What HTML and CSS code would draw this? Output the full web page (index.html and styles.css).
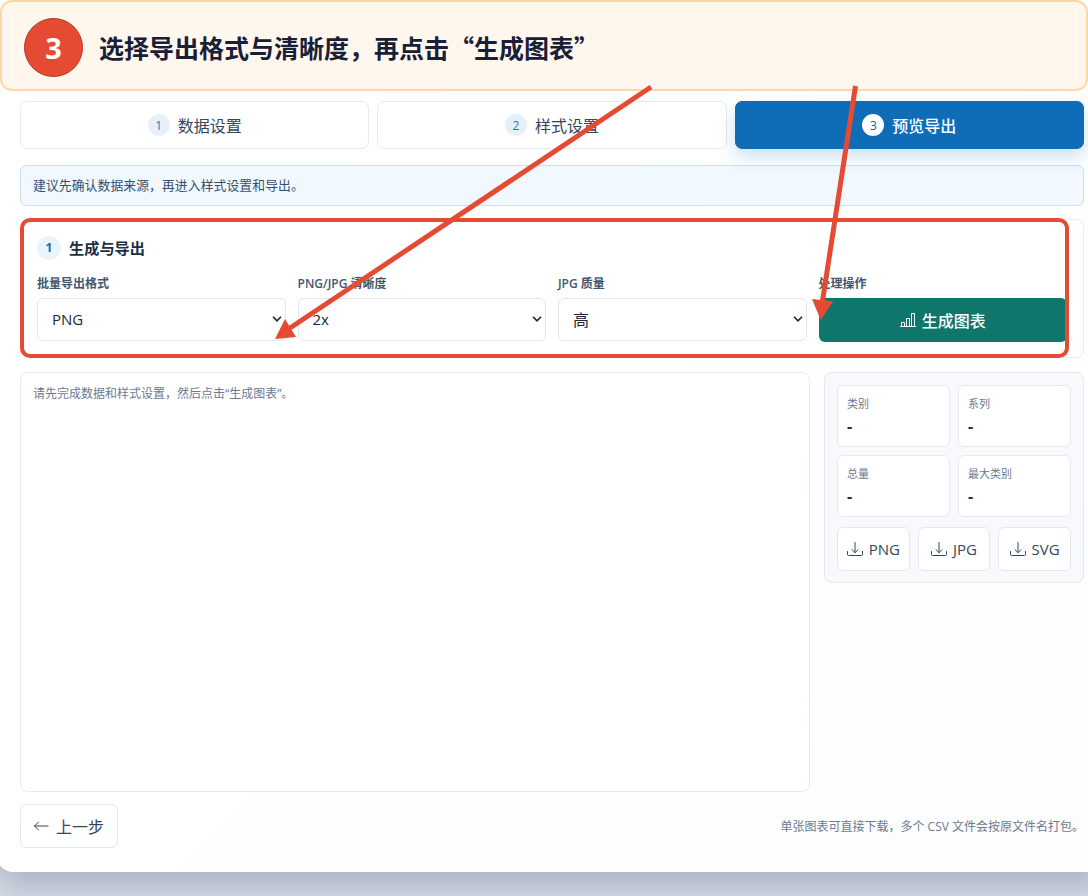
FILE: index.html
```
<!DOCTYPE html>
<html lang="zh-CN">
<head>
    <meta charset="UTF-8">
    <meta name="viewport" content="width=device-width, initial-scale=1.0">
    <link rel="stylesheet" href="styles.css">
    <title>预览导出</title>
</head>

<body>
    <div class="banner-wrap">
        <header class="banner">
            <span class="banner-num">3</span>
            <h1>选择导出格式与清晰度，再点击“生成图表”</h1>
        </header>
    </div>

    <main class="card">
        <nav class="steps">
            <div class="step"><span class="step-num">1</span>数据设置</div>
            <div class="step"><span class="step-num">2</span>样式设置</div>
            <div class="step active"><span class="step-num">3</span>预览导出</div>
        </nav>

        <p class="hint">建议先确认数据来源，再进入样式设置和导出。</p>

        <section class="export">
            <h2><span class="section-num">1</span>生成与导出</h2>
            <div class="fields">
                <div class="field">
                    <label>批量导出格式</label>
                    <div class="select latin">PNG<svg class="chevron" viewBox="0 0 10 6"><path d="M1 .8 5 4.8 9 .8"/></svg></div>
                </div>
                <div class="field">
                    <label>PNG/JPG 清晰度</label>
                    <div class="select latin">2x<svg class="chevron" viewBox="0 0 10 6"><path d="M1 .8 5 4.8 9 .8"/></svg></div>
                </div>
                <div class="field">
                    <label>JPG 质量</label>
                    <div class="select">高<svg class="chevron" viewBox="0 0 10 6"><path d="M1 .8 5 4.8 9 .8"/></svg></div>
                </div>
                <div class="field">
                    <label>处理操作</label>
                    <button class="generate">
                        <svg class="icon" viewBox="0 0 16 16"><path d="M.5 14.500h15M1.500 14.500v-4h3v4M6.500 14.500v-8h3v8M11.500 14.500v-13h3v13"/></svg>
                        生成图表
                    </button>
                </div>
            </div>
        </section>

        <div class="workspace">
            <div class="preview">请先完成数据和样式设置，然后点击“生成图表”。</div>
            <aside class="side">
                <div class="stats">
                    <div class="stat"><span>类别</span><b>-</b></div>
                    <div class="stat"><span>系列</span><b>-</b></div>
                    <div class="stat"><span>总量</span><b>-</b></div>
                    <div class="stat"><span>最大类别</span><b>-</b></div>
                </div>
                <div class="downloads">
                    <button><svg class="icon" viewBox="0 0 16 16"><path d="M.5 10.500v3a1 1 0 0 0 1 1h13a1 1 0 0 0 1-1v-3M8 1.500v10M5 8.700l3 3 3-3"/></svg>PNG</button>
                    <button><svg class="icon" viewBox="0 0 16 16"><path d="M.5 10.500v3a1 1 0 0 0 1 1h13a1 1 0 0 0 1-1v-3M8 1.500v10M5 8.700l3 3 3-3"/></svg>JPG</button>
                    <button><svg class="icon" viewBox="0 0 16 16"><path d="M.5 10.500v3a1 1 0 0 0 1 1h13a1 1 0 0 0 1-1v-3M8 1.500v10M5 8.700l3 3 3-3"/></svg>SVG</button>
                </div>
            </aside>
        </div>

        <footer class="bottom">
            <button class="prev"><svg class="icon" viewBox="0 0 16 16"><path d="M15 8H1.500M5.500 4l-4 4 4 4"/></svg>上一步</button>
            <span class="note">单张图表可直接下载，多个 CSV 文件会按原文件名打包。</span>
        </footer>
    </main>

    <!-- 标注 -->
    <svg class="marks" viewBox="0 0 1088 896">
        <rect x="22" y="220" width="1045" height="136" rx="8"/>
        <path d="M651 87 290 328M855.500 86 822.500 301"/>
        <polygon points="275,339 285,319 296,337"/>
        <polygon points="820.700,320 812,299 833.300,301.300"/>
    </svg>
</body>
</html>
```

FILE: styles.css
```
* {
    box-sizing: border-box;
}
body {
    position: relative;
    margin: 0;
    width: 1088px;
    height: 896px;
    overflow: hidden;
    background-color: #dbe0e9;
    color: #24364b;
    font-family: "Open Sans", "Noto Sans CJK SC", sans-serif;
    font-size: 16px;
}
h1, h2, p {
    margin: 0;
}
button {
    font: inherit;
    color: inherit;
}
.banner-wrap {
    position: relative;
    z-index: 1;
    background-color: #fff;
}
.banner {
    display: flex;
    align-items: center;
    gap: 17px;
    height: 91px;
    padding: 4px 22px 0;
    background-color: #fff6ed;
    border: 2px solid #fed7a5;
    border-radius: 12px;
}
.banner-num {
    display: grid;
    place-items: center;
    width: 59px;
    height: 59px;
    border: 1px solid #b83422;
    border-radius: 50%;
    background-color: #e44b32;
    color: #fff;
    font-size: 29px;
    font-weight: 700;
    line-height: 57px;
}
.banner h1 {
    margin: -2px 0 0 -1px;
    color: #172036;
    font-family: "Noto Sans CJK SC", sans-serif;
    font-size: 25px;
    line-height: 36px;
}
/* 卡片的顶部被说明条盖住 */
.card {
    width: 1112px;
    height: 801px;
    margin: -20px 0 0 -4px;
    padding: 30px 28px 24px 24px;
    border-radius: 18px;
    background: linear-gradient(135deg, #fff 0%, #fdfefe 75%, #fcfcfd 100%);
    box-shadow: 0 16px 36px rgba(35, 50, 80, .28);
}
.steps {
    display: grid;
    grid-template-columns: repeat(3, 1fr);
    gap: 8px;
    width: 1064px;
    height: 48px;
}
.step {
    display: flex;
    align-items: center;
    justify-content: center;
    gap: 8px;
    border: 1px solid #e7eaef;
    border-radius: 7px;
    background-color: #fff;
    color: #33465b;
}
.step-num {
    display: grid;
    place-items: center;
    width: 22px;
    height: 22px;
    border-radius: 50%;
    background-color: #e7f0f9;
    color: #2f76a5;
    font-size: 12px;
}
.step.active {
    border-color: #0f6db7;
    background-color: #0f6db7;
    color: #fff;
    font-weight: 500;
    box-shadow: 0 8px 18px rgba(15, 109, 183, .2);
}
.active .step-num {
    background-color: #fff;
    color: #1c5c88;
    font-weight: 400;
}
.hint {
    width: 1064px;
    height: 41px;
    margin-top: 16px;
    padding-left: 12px;
    border: 1px solid #cfe0ec;
    border-radius: 6px;
    background-color: #f1f8fe;
    color: #34506e;
    font-size: 12.8px;
    letter-spacing: .1px;
    line-height: 38px;
}
.export {
    width: 1064px;
    height: 139px;
    margin-top: 13px;
    padding: 16px;
    border: 1px solid #e9ecf0;
    border-radius: 8px;
    background-color: #fff;
}
.export h2 {
    display: flex;
    align-items: center;
    gap: 8px;
    height: 24px;
    color: #1b2f45;
    font-size: 15.2px;
    line-height: 22px;
}
.section-num {
    display: grid;
    place-items: center;
    width: 24px;
    height: 24px;
    border-radius: 50%;
    background-color: #e9f4fc;
    color: #0f6db7;
    font-size: 12px;
}
.fields {
    display: grid;
    grid-template-columns: repeat(4, 1fr);
    gap: 12px;
    margin-top: 14px;
}
.field label {
    display: block;
    height: 24px;
    color: #43566d;
    font-size: 12px;
    font-weight: 600;
    line-height: 19px;
}
.select {
    display: flex;
    align-items: center;
    justify-content: space-between;
    height: 43px;
    padding: 0 3px 1px 14px;
    border: 1px solid #e2e6eb;
    border-radius: 6px;
    background-color: #fff;
    color: #212833;
}
.latin {
    font-size: 15px;
}
.chevron {
    width: 10px;
    height: 6px;
    fill: none;
    stroke: #20242b;
    stroke-width: 1.6;
}
.generate {
    display: flex;
    align-items: center;
    justify-content: center;
    gap: 6px;
    width: 100%;
    height: 44px;
    border: 0;
    border-radius: 6px;
    background-color: #0f766b;
    color: #fff;
    font-weight: 500;
}
.icon {
    flex: none;
    width: 16px;
    height: 16px;
    fill: none;
    stroke: currentColor;
    stroke-linecap: round;
    stroke-linejoin: round;
}
.workspace {
    display: grid;
    grid-template-columns: 790px 260px;
    gap: 14px;
    align-items: start;
    margin-top: 14px;
}
.preview {
    height: 420px;
    padding: 12px;
    border: 1px solid #e6eaee;
    border-radius: 8px;
    background-color: #fff;
    color: #6b7a90;
    font-size: 12px;
    line-height: 18px;
}
.side {
    height: 211px;
    padding: 12px;
    border: 1px solid #e3e8ee;
    border-radius: 8px;
    background-color: #f8f9fc;
}
.stats {
    display: grid;
    grid-template-columns: 1fr 1fr;
    gap: 8px;
}
.stat {
    display: flex;
    flex-direction: column;
    height: 62px;
    padding: 9px;
    border: 1px solid #e6eaef;
    border-radius: 6px;
    background-color: #fff;
}
.stat span {
    color: #6b7a90;
    font-size: 11px;
    line-height: 18px;
}
.stat b {
    color: #1b2f45;
    font-size: 16px;
    line-height: 26px;
}
.downloads {
    display: grid;
    grid-template-columns: repeat(3, 1fr);
    gap: 8px;
    margin-top: 10px;
}
.downloads button {
    display: flex;
    align-items: center;
    justify-content: center;
    gap: 6px;
    height: 44px;
    padding: 0;
    border: 1px solid #e3e8ee;
    border-radius: 6px;
    background-color: #fff;
    color: #33465b;
    font-size: 15px;
}
.bottom {
    display: flex;
    align-items: center;
    justify-content: space-between;
    width: 1064px;
    margin-top: 12px;
}
.prev {
    display: flex;
    align-items: center;
    gap: 7px;
    width: 98px;
    height: 44px;
    padding: 0 12px;
    border: 1px solid #e3e8ee;
    border-radius: 6px;
    background-color: #fff;
    color: #33465b;
}
.note {
    color: #6b7a90;
    font-size: 12px;
}
.marks {
    position: absolute;
    z-index: 2;
    top: 0;
    left: 0;
    width: 1088px;
    height: 896px;
    pointer-events: none;
}
.marks rect {
    fill: none;
    stroke: #e44b32;
    stroke-width: 4;
}
.marks path {
    fill: none;
    stroke: #e44b32;
    stroke-width: 5;
}
.marks polygon {
    fill: #e44b32;
}
```
